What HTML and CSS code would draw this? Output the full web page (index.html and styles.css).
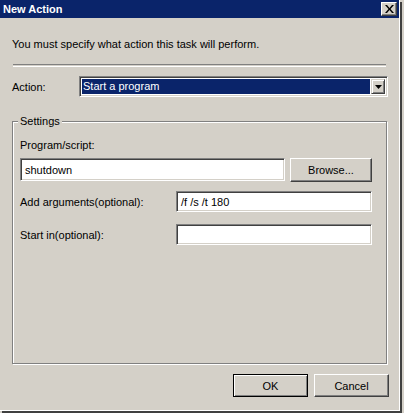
FILE: index.html
```html
<!DOCTYPE html>
<html>
<head>
<meta charset="utf-8">
<link rel="stylesheet" href="styles.css">
</head>
<body>
<div class="window">
  <div class="titlebar">
    <span class="title">New Action</span>
    <span class="close"><svg width="9" height="8" viewBox="0 0 9 8"><path d="M0 0h2l2.5 3 2.5-3h2L5.5 4 9 8H7L4.5 5 2 8H0l3.5-4z" fill="#000"/></svg></span>
  </div>
  <div class="content">
    <p class="intro">You must specify what action this task will perform.</p>
    <div class="separator"></div>
    <div class="action-row">
      <span class="action-label">Action:</span>
      <div class="combo">
        <div class="combo-field">Start a program</div>
        <div class="combo-btn"><svg width="7" height="4" viewBox="0 0 7 4"><path d="M0 0h7L3.5 4z" fill="#000"/></svg></div>
      </div>
    </div>
    <fieldset class="group">
      <legend>Settings</legend>
      <div class="field-label">Program/script:</div>
      <div class="program-row">
        <div class="input wide">shutdown</div>
        <div class="button browse">Browse...</div>
      </div>
      <div class="opt-row first">
        <span class="opt-label">Add arguments(optional):</span>
        <div class="input opt">/f /s /t 180</div>
      </div>
      <div class="opt-row second">
        <span class="opt-label">Start in(optional):</span>
        <div class="input opt"></div>
      </div>
    </fieldset>
    <div class="buttons">
      <div class="button default">OK</div>
      <div class="button">Cancel</div>
    </div>
  </div>
</div>
</body>
</html>
```
FILE: styles.css
```css
html, body {
  margin: 0;
  padding: 0;
  background: #d4d0c8;
}
body {
  width: 404px;
  height: 413px;
  overflow: hidden;
  font-family: "Liberation Sans", Arial, sans-serif;
  font-size: 11px;
  color: #000;
}
.window {
  width: 399px;
  height: 410px;
  background: #d4d0c8;
  border-right: 1px solid #ffffff;
  border-bottom: 1px solid #ffffff;
  box-shadow: 2px 2px 0 #404040;
  display: flex;
  flex-direction: column;
}
.titlebar {
  height: 18px;
  background: #0a246a;
  color: #fff;
  font-weight: bold;
  display: flex;
  align-items: center;
  justify-content: space-between;
  padding-left: 3px;
  padding-right: 2px;
}
.title {
  line-height: 14px;
}
.close {
  width: 14px;
  height: 12px;
  background: #d4d0c8;
  border: 1px solid;
  border-color: #fff #404040 #404040 #fff;
  box-shadow: inset -1px -1px 0 #808080;
  display: flex;
  align-items: center;
  justify-content: center;
}
.content {
  padding: 0 11px 0 12px;
  display: flex;
  flex-direction: column;
}
.intro {
  margin: 19px 0 0 0;
  line-height: 14px;
  height: 14px;
}
.separator {
  margin: 13px 2px 0 1px;
  height: 1px;
  border-top: 1px solid #808080;
  border-bottom: 1px solid #fff;
}
.action-row {
  margin-top: 9px;
  display: flex;
  align-items: center;
  height: 21px;
}
.action-label {
  width: 67px;
}
.combo {
  flex: 1;
  height: 21px;
  box-sizing: border-box;
  border: 1px solid;
  border-color: #808080 #fff #fff #808080;
  box-shadow: inset 1px 1px 0 #404040, inset -1px -1px 0 #d4d0c8;
  background: #fff;
  padding: 2px;
  display: flex;
}
.combo-field {
  flex: 1;
  background: #0a246a;
  color: #fff;
  line-height: 15px;
  padding-left: 1px;
  margin-right: 1px;
}
.combo-btn {
  width: 14px;
  box-sizing: border-box;
  background: #d4d0c8;
  border: 1px solid;
  border-color: #d4d0c8 #404040 #404040 #d4d0c8;
  box-shadow: inset 1px 1px 0 #fff, inset -1px -1px 0 #808080;
  display: flex;
  align-items: center;
  justify-content: center;
}
.group {
  margin: 18px 1px 0 0;
  padding: 11px 14px 0 7px;
  height: 236px;
  border: 1px solid #808080;
  box-shadow: inset 1px 1px 0 #fff, 1px 1px 0 #fff;
  min-width: 0;
}
.group legend {
  padding: 0 2px;
  margin-left: -2px;
  line-height: 13px;
  background: #d4d0c8;
}
.field-label {
  line-height: 13px;
}
.program-row {
  margin-top: 6px;
  display: flex;
  justify-content: space-between;
  height: 23px;
}
.input {
  box-sizing: border-box;
  background: #fff;
  border: 1px solid;
  border-color: #808080 #fff #fff #808080;
  box-shadow: inset 1px 1px 0 #404040, inset -1px -1px 0 #d4d0c8;
  padding-left: 4px;
  display: flex;
  align-items: center;
}
.input.wide {
  width: 265px;
}
.button {
  box-sizing: border-box;
  background: #d4d0c8;
  border: 1px solid;
  border-color: #fff #404040 #404040 #fff;
  box-shadow: inset -1px -1px 0 #808080, inset 1px 1px 0 #d4d0c8;
  display: flex;
  align-items: center;
  justify-content: center;
}
.button.browse {
  width: 82px;
  height: 24px;
}
.opt-row {
  display: flex;
  align-items: center;
  justify-content: space-between;
}
.opt-row.first {
  margin-top: 10px;
}
.opt-row.second {
  margin-top: 12px;
}
.input.opt {
  width: 196px;
  height: 21px;
}
.buttons {
  margin-top: 10px;
  display: flex;
  justify-content: flex-end;
  gap: 6px;
  margin-right: -1px;
}
.buttons .button {
  width: 75px;
  height: 23px;
}
.buttons .button.default {
  outline: 1px solid #000;
  outline-offset: -1px;
  border-color: #000;
  box-shadow: inset 1px 1px 0 #fff, inset -1px -1px 0 #808080;
}
```
